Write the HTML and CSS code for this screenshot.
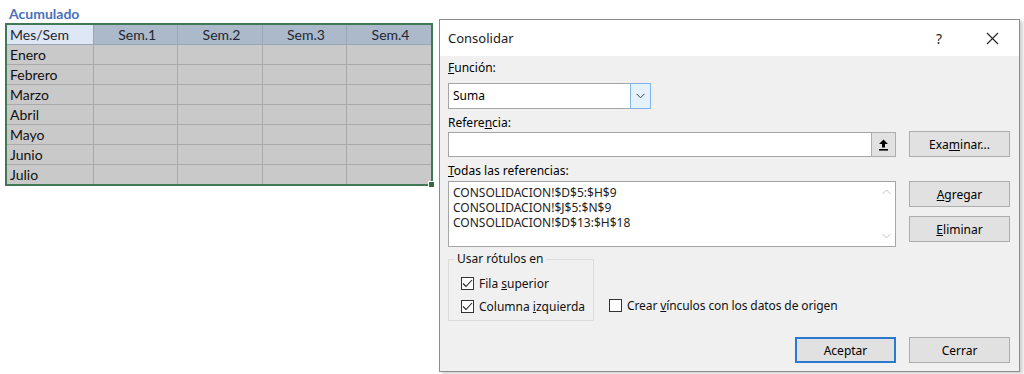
FILE: index.html
```html
<!DOCTYPE html>
<html lang="es">
<head>
<meta charset="utf-8">
<title>Consolidar</title>
<link rel="stylesheet" href="styles.css">
</head>
<body>
<div class="page">
  <div class="sheet">
    <div class="sheet-title">Acumulado</div>
    <div class="grid-wrap">
      <table class="grid">
        <tr class="hdr"><td class="corner">Mes/Sem</td><td>Sem.1</td><td>Sem.2</td><td>Sem.3</td><td>Sem.4</td></tr>
        <tr><td>Enero</td><td></td><td></td><td></td><td></td></tr>
        <tr><td>Febrero</td><td></td><td></td><td></td><td></td></tr>
        <tr><td>Marzo</td><td></td><td></td><td></td><td></td></tr>
        <tr><td>Abril</td><td></td><td></td><td></td><td></td></tr>
        <tr><td>Mayo</td><td></td><td></td><td></td><td></td></tr>
        <tr><td>Junio</td><td></td><td></td><td></td><td></td></tr>
        <tr><td>Julio</td><td></td><td></td><td></td><td></td></tr>
      </table>
      <span class="handle"></span>
    </div>
  </div>

  <div class="dialog">
    <div class="titlebar">
      <span class="title">Consolidar</span>
      <span class="help">?</span>
      <span class="close">
        <svg width="13" height="13" viewBox="0 0 13 13"><path d="M1 1 L12 12 M12 1 L1 12" stroke="#222" stroke-width="1.1" fill="none"/></svg>
      </span>
    </div>
    <div class="body">
      <div class="label lbl-func"><u>F</u>unción:</div>
      <div class="select">
        <span class="select-val">Suma</span>
        <span class="select-btn">
          <svg width="9" height="6" viewBox="0 0 9 6"><path d="M0.5 0.8 L4.5 4.8 L8.5 0.8" stroke="#444" stroke-width="1" fill="none"/></svg>
        </span>
      </div>
      <div class="label lbl-ref">Refere<u>n</u>cia:</div>
      <div class="row ref-row">
        <div class="input">
          <span class="collapse-btn">
            <svg width="11" height="12" viewBox="0 0 11 12"><path d="M5.5 0.5 L10 5 L7 5 L7 8.5 L4 8.5 L4 5 L1 5 Z" fill="#000"/><rect x="1" y="10" width="9" height="1.6" fill="#000"/></svg>
          </span>
        </div>
        <button class="btn">Exa<u>m</u>inar...</button>
      </div>
      <div class="label lbl-all"><u>T</u>odas las referencias:</div>
      <div class="row list-row">
        <div class="listbox">
          <div class="items">
            <div>CONSOLIDACION!$D$5:$H$9</div>
            <div>CONSOLIDACION!$J$5:$N$9</div>
            <div>CONSOLIDACION!$D$13:$H$18</div>
          </div>
          <div class="scroll">
            <svg width="9" height="6" viewBox="0 0 9 6"><path d="M0.5 5 L4.5 1 L8.5 5" stroke="#c2c2c2" stroke-width="1" fill="none"/></svg>
            <svg width="9" height="6" viewBox="0 0 9 6"><path d="M0.5 1 L4.5 5 L8.5 1" stroke="#c2c2c2" stroke-width="1" fill="none"/></svg>
          </div>
        </div>
        <div class="side">
          <button class="btn"><u>A</u>gregar</button>
          <button class="btn"><u>E</u>liminar</button>
        </div>
      </div>
      <div class="row opts-row">
        <fieldset class="group">
          <legend>Usar rótulos en</legend>
          <label class="check"><span class="box"><svg width="11" height="9" viewBox="0 0 11 9"><path d="M1 4.5 L4 7.5 L10 1" stroke="#222" stroke-width="1.1" fill="none"/></svg></span><span>Fila <u>s</u>uperior</span></label>
          <label class="check"><span class="box"><svg width="11" height="9" viewBox="0 0 11 9"><path d="M1 4.5 L4 7.5 L10 1" stroke="#222" stroke-width="1.1" fill="none"/></svg></span><span>Columna <u>i</u>zquierda</span></label>
        </fieldset>
        <label class="check link-check"><span class="box"></span><span>Crear <u>v</u>ínculos con los datos de origen</span></label>
      </div>
      <div class="row footer">
        <button class="btn btn-default">Aceptar</button>
        <button class="btn">Cerrar</button>
      </div>
    </div>
  </div>
</div>
</body>
</html>
```

FILE: styles.css
```css
html, body {
  margin: 0;
  padding: 0;
  background: #ffffff;
}

.page {
  display: flex;
  align-items: flex-start;
  width: 1024px;
  height: 374px;
  overflow: hidden;
}

/* ---------- spreadsheet ---------- */
.sheet {
  margin-left: 5px;
  font-family: Lato, "Open Sans", sans-serif;
}

.sheet-title {
  height: 23px;
  padding-left: 4px;
  font-size: 14px;
  font-weight: bold;
  line-height: 18px;
  padding-top: 5px;
  box-sizing: border-box;
  color: #4a72bb;
}

.grid-wrap {
  position: relative;
  width: 428px;
  border: 2px solid #3f7a55;
  box-sizing: border-box;
}

.grid {
  border-collapse: collapse;
  width: 100%;
  table-layout: fixed;
}

.grid td {
  height: 19px;
  padding: 0 0 0 3px;
  border: 1px solid #a9a9a9;
  background: #c9c9c9;
  font-size: 14px;
  line-height: 19px;
  color: #111;
  white-space: nowrap;
  overflow: hidden;
}

.grid td:first-child {
  width: 83px;
  border-left: none;
}

.grid td:last-child {
  border-right: none;
}

.grid tr:first-child td {
  border-top: none;
}

.grid tr:last-child td {
  border-bottom: none;
}

.grid .hdr td {
  background: #acb9ca;
  text-align: center;
  color: #1e2633;
  border-color: #9aa6b6;
}

.grid .hdr td.corner {
  background: #dde7f6;
  text-align: left;
}

.handle {
  position: absolute;
  right: -4px;
  bottom: -4px;
  width: 5px;
  height: 5px;
  background: #2f6b45;
  border: 1px solid #fff;
}

/* ---------- dialog ---------- */
.dialog {
  margin-left: 6px;
  margin-top: 19px;
  width: 581px;
  height: 353px;
  box-sizing: border-box;
  border: 1px solid #8c8c8c;
  background: #f0f0f0;
  box-shadow: 3px 2px 3px rgba(0, 0, 0, 0.18);
  font-family: "Noto Sans", "Open Sans", sans-serif;
  font-size: 12px;
  color: #000;
}

.titlebar {
  height: 36px;
  background: #ffffff;
  display: flex;
  align-items: center;
  padding-left: 8px;
}

.title {
  flex: 1;
  font-size: 13px;
  color: #1a1a1a;
  padding-bottom: 1px;
}

.help {
  font-size: 14px;
  color: #222;
  width: 20px;
  margin-right: 30px;
}

.close {
  width: 13px;
  height: 13px;
  margin-right: 20px;
  display: flex;
}

.body {
  padding: 4px 9px 0 8px;
}

.label {
  height: 16px;
  line-height: 16px;
}

.lbl-func { margin-bottom: 7px; }
.lbl-ref { margin-top: 6px; }
.lbl-all { margin-top: 6px; margin-bottom: 2px; }

.select {
  width: 203px;
  height: 26px;
  box-sizing: border-box;
  border: 1px solid #a5a5a5;
  background: #ffffff;
  display: flex;
}

.select-val {
  flex: 1;
  line-height: 24px;
  padding-left: 4px;
}

.select-btn {
  width: 19px;
  margin: -1px -1px -1px 0;
  border: 1px solid #7eb4ea;
  background: #e5f1fb;
  display: flex;
  align-items: center;
  justify-content: center;
}

.row {
  display: flex;
}

.ref-row {
  height: 26px;
  align-items: flex-start;
  gap: 13px;
}

.input {
  width: 448px;
  height: 25px;
  margin-top: 1px;
  box-sizing: border-box;
  border: 1px solid #a5a5a5;
  background: #fff;
  display: flex;
  justify-content: flex-end;
}

.collapse-btn {
  width: 23px;
  margin: -1px -1px -1px 0;
  border: 1px solid #adadad;
  background: #e1e1e1;
  display: flex;
  align-items: center;
  justify-content: center;
}

.btn {
  width: 101px;
  height: 26px;
  box-sizing: border-box;
  border: 1px solid #adadad;
  background: #e1e1e1;
  font-family: inherit;
  font-size: 12px;
  color: #000;
  padding: 0;
  margin: 0;
}

.btn-default {
  border: 2px solid #2b7ad0;
}

.list-row {
  gap: 13px;
  height: 66px;
}

.listbox {
  width: 448px;
  height: 66px;
  box-sizing: border-box;
  border: 1px solid #a5a5a5;
  background: #fff;
  display: flex;
}

.items {
  flex: 1;
  padding: 3px 0 0 4px;
  line-height: 15px;
  color: #222;
}

.scroll {
  width: 17px;
  display: flex;
  flex-direction: column;
  align-items: center;
  justify-content: space-between;
  padding: 7px 0 7px;
}

.side {
  display: flex;
  flex-direction: column;
  gap: 9px;
}

.opts-row {
  margin-top: 5px;
  align-items: flex-end;
  height: 69px;
}

.group {
  width: 146px;
  height: 69px;
  box-sizing: border-box;
  margin: 0;
  border: 1px solid #dcdcdc;
  padding: 0 0 0 12px;
  display: flex;
  flex-direction: column;
  gap: 7px;
}

.group legend {
  padding: 0 3px;
  margin-left: -7px;
  line-height: 14px;
  color: #111;
}

.check {
  display: flex;
  align-items: center;
  height: 16px;
  color: #111;
}

.group legend + .check {
  margin-top: 9px;
}

.box {
  width: 13px;
  height: 13px;
  box-sizing: border-box;
  border: 1px solid #333;
  background: #fff;
  margin-right: 5px;
  display: flex;
  align-items: center;
  justify-content: center;
}

.link-check {
  margin-left: 15px;
  margin-bottom: 8px;
  letter-spacing: -0.1px;
}

.footer {
  margin-top: 16px;
  justify-content: flex-end;
  gap: 13px;
}
```
